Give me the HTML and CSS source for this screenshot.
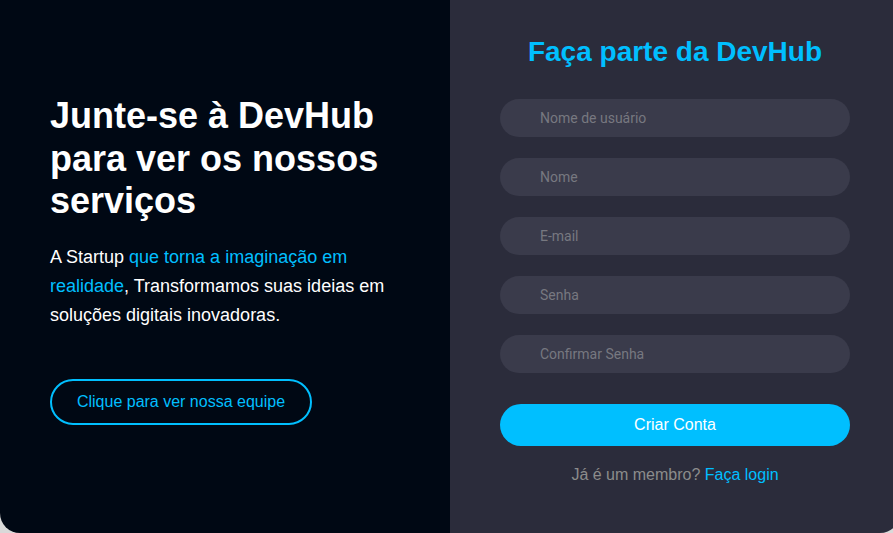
FILE: index.html
```html
<!DOCTYPE html>
<html lang="pt-BR">
<head>
<meta charset="utf-8">
<title>DevHub - Cadastro</title>
<link rel="stylesheet" href="styles.css">
</head>
<body>
<div class="container">
  <section class="intro">
    <h1 class="intro-title">Junte-se à DevHub para ver os nossos serviços</h1>
    <p class="intro-text">A Startup <span class="accent">que torna a imaginação em realidade</span>, Transformamos suas ideias em soluções digitais inovadoras.</p>
    <a class="team-btn" href="#">Clique para ver nossa equipe</a>
  </section>
  <section class="signup">
    <h2 class="signup-title">Faça parte da DevHub</h2>
    <form class="signup-form">
      <input class="field" type="text" placeholder="Nome de usuário">
      <input class="field" type="text" placeholder="Nome">
      <input class="field" type="email" placeholder="E-mail">
      <input class="field" type="password" placeholder="Senha">
      <input class="field" type="password" placeholder="Confirmar Senha">
      <button class="submit" type="button">Criar Conta</button>
    </form>
    <p class="login">Já é um membro? <a href="#">Faça login</a></p>
  </section>
</div>
</body>
</html>
```

FILE: styles.css
```css
* { box-sizing: border-box; }
html, body {
  margin: 0;
  padding: 0;
  height: 100%;
  overflow: hidden;
}
body {
  background: #d9d9d9;
  font-family: "Liberation Sans", Arial, sans-serif;
}
.container {
  display: flex;
  width: 900px;
  height: 533px;
  border-radius: 0 0 20px 20px;
  overflow: hidden;
}
.intro {
  width: 450px;
  background: #000814;
  color: #fff;
  padding: 95px 50px 0 50px;
}
.intro-title {
  margin: 0;
  font-size: 36px;
  line-height: 42.5px;
  font-weight: 700;
}
.intro-text {
  margin: 20px 0 0 0;
  font-size: 18px;
  line-height: 29px;
}
.accent { color: #00bfff; }
.team-btn {
  display: inline-flex;
  align-items: center;
  justify-content: center;
  margin-top: 49px;
  width: 262px;
  height: 46px;
  border: 2px solid #00bfff;
  border-radius: 24px;
  color: #00bfff;
  font-size: 16px;
  text-decoration: none;
}
.signup {
  width: 450px;
  background: #2b2c3b;
  padding: 34px 50px 0 50px;
  display: flex;
  flex-direction: column;
  align-items: center;
}
.signup-title {
  margin: 0;
  color: #00bfff;
  font-size: 28px;
  line-height: 36px;
  font-weight: 700;
}
.signup-form {
  margin-top: 29px;
  width: 350px;
  display: flex;
  flex-direction: column;
  gap: 21px;
}
.field {
  width: 100%;
  height: 38px;
  border: none;
  border-radius: 19px;
  background: #3a3b4b;
  padding: 0 0 0 40px;
  font-family: Roboto, "Liberation Sans", sans-serif;
  font-size: 14px;
  color: #ddd;
  outline: none;
}
.field::placeholder { color: #777880; }
.submit {
  margin-top: 10px;
  height: 42px;
  border: none;
  border-radius: 21px;
  background: #00bfff;
  color: #fff;
  font-family: "Liberation Sans", Arial, sans-serif;
  font-size: 16px;
}
.login {
  margin: 20px 0 0 0;
  font-size: 16px;
  color: #8c8c8c;
}
.login a {
  color: #00bfff;
  text-decoration: none;
}
```
